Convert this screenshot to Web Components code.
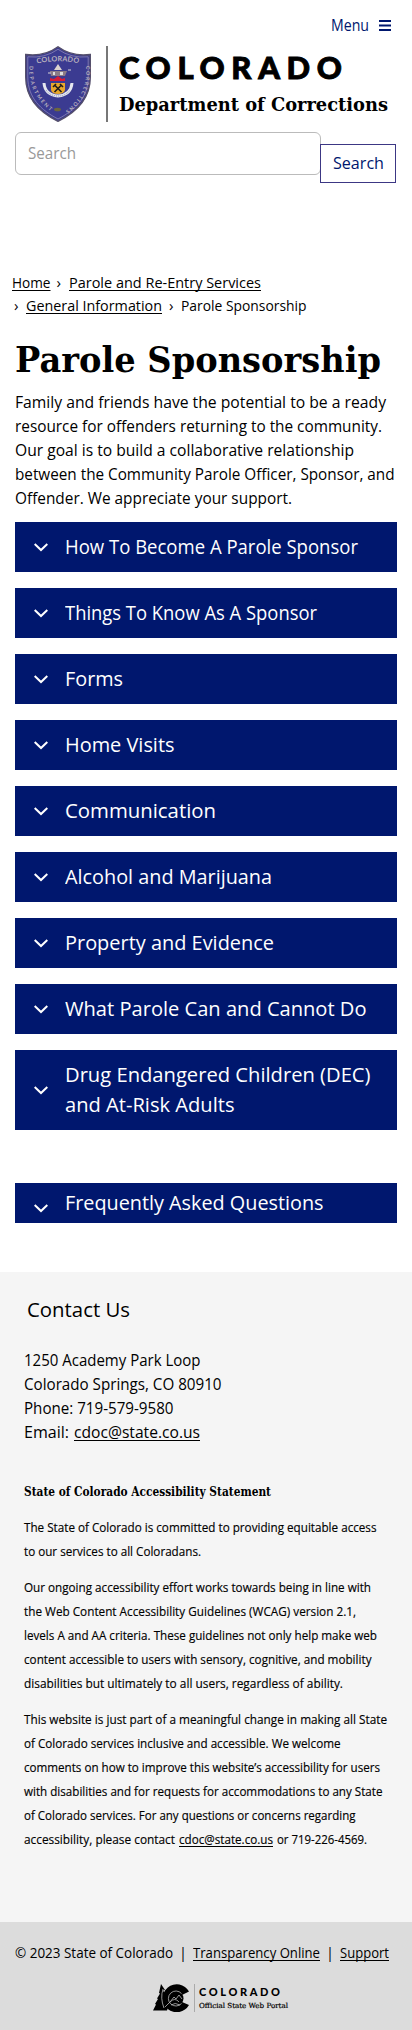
<!DOCTYPE html>
<html lang="en">
<head>
<meta charset="utf-8">
<title>Parole Sponsorship | Department of Corrections</title>
<style>
html,body{margin:0;padding:0;background:#fff}
body{font-family:"Open Sans","Noto Sans",sans-serif;font-size:16px;line-height:24px;color:#000;width:412px}
</style>
</head>
<body>
<doc-page></doc-page>
<script>
const define = (name, html, after) => {
  const t = document.createElement('template');
  t.innerHTML = html;
  customElements.define(name, class extends HTMLElement {
    constructor() {
      super();
      this.attachShadow({mode: 'open'}).appendChild(t.content.cloneNode(true));
    }
    connectedCallback() { if (after) after.call(this); }
  });
};

// One line of text set to a given measure: "w" is the width; "track" spaces letters instead of condensing them.
define('fit-line', `
<style>
:host{display:block;white-space:nowrap}
span{display:inline-block;transform-origin:0 50%;vertical-align:top}
:host([link]) span{text-decoration:underline;text-decoration-skip-ink:none;text-decoration-thickness:1px;text-underline-offset:2px}
</style><span><slot></slot></span>`, function () {
  const w = parseFloat(this.getAttribute('w'));
  const s = this.shadowRoot.querySelector('span');
  this.style.width = w + 'px';
  const natural = s.getBoundingClientRect().width;
  if (!natural) return;
  if (this.hasAttribute('track')) {
    const n = this.textContent.trim().length;
    s.style.letterSpacing = (w - natural) / (n - 1) + 'px';
  } else {
    s.style.transform = 'scaleX(' + w / natural + ')';
  }
});

define('doc-shield', `
<style>:host{display:block;width:66px;height:76px}svg{display:block}text{font-family:Lato,sans-serif;font-weight:700;fill:#b9b1bd}</style>
<svg width="66" height="76" viewBox="0 0 66 76">
<defs><path id="top" d="M12 17.500Q33 13 55 17.500"/><path id="left" d="M4.500 20C3 41 12 55 29 68"/><path id="right" d="M61 20C63 41 54 55 37 68"/></defs>
<path d="M.7 8.500Q19 11 33 .8Q47 11 65.300 8.500V31C65.300 53 52 66 33 75.300C14 66 .7 53 .7 31Z" fill="#3b3b91" stroke="#55506c" stroke-width="1.400"/>
<path d="M2.800 10.800Q20 12.500 33 3.300Q46 12.500 63.200 10.800V31C63.200 52 50 64 33 73C16 64 2.800 52 2.800 31Z" fill="none" stroke="#8d87b4" stroke-width=".8"/>
<text font-size="7.200"><textPath href="#top" textLength="42">COLORADO</textPath></text>
<text font-size="5.200"><textPath href="#left" textLength="52">DEPARTMENT</textPath></text>
<text font-size="5.200"><textPath href="#right" textLength="52">CORRECTIONS</textPath></text>
<path d="M33 18l4 6h-8z" fill="#ddd4ce"/><path d="M25 25h17l-2 5H26z" fill="#8b7b86"/><path d="M28 26h2v3h-2zm7 0h3v3h-3z" fill="#ddd"/>
<path d="M43 24h3M23 27h3" stroke="#d8d3d6"/>
<path d="M25 35v-3l4 1 4-3 4 3 3-1v3z" fill="#d61b36"/>
<path d="M19 37q1 12 14 13 13-1 14-13" fill="none" stroke="#e6e7ef" stroke-width="3"/>
<path d="M26 37h14v7q-1 4-7 4-6 0-7-4z" fill="#e9a82b"/>
<path d="M29.500 39l7 7m0-7-7 7M28 41l3-3m4 0 3 3" stroke="#201c1b" stroke-width="1.600" fill="none"/>
<path d="M21 44q4 6 12 6 8 0 12-6" fill="none" stroke="#6973a0" stroke-width=".7" stroke-dasharray="1 1"/>
<ellipse cx="32.500" cy="63.500" rx="3.500" ry="1.800" fill="#6d673f"/>
</svg>`);

define('site-header', `
<style>
:host{display:block;height:271px;color:#00176e}
.menu{display:flex;justify-content:flex-end;align-items:flex-start;gap:10px;padding:13px 21px 0 0;height:46px;box-sizing:border-box}
.menu svg{margin-top:6px}
.brand{display:flex;padding-left:25px;height:76px;color:#000}
.rule{width:2px;background:#777;margin:0 11px 0 15px}
.big{font:900 31px/32px Lato,sans-serif;margin-top:5px;-webkit-text-stroke:.9px #000}
.dept{font:bold 18.500px/24px "DejaVu Serif",serif;margin-top:10px}
.search{display:flex;margin:10px 0 0 15px;height:60px;align-items:flex-start}
.input{box-sizing:border-box;width:306px;height:43px;border:1px solid #bbb;border-radius:6px;padding:8px 12px;color:#999}
.button{box-sizing:border-box;width:76px;height:39px;margin:12px 0 0 -1px;border:1px solid #3c3784;background:#fff;padding:6px 12px}
</style>
<div class="menu"><fit-line w="38">Menu</fit-line><svg width="12" height="12"><path d="M0 2h12M0 6.500h12M0 11h12" stroke="#00176e" stroke-width="2"/></svg></div>
<div class="brand"><doc-shield></doc-shield><div class="rule"></div><div><fit-line class="big" w="223" track>COLORADO</fit-line><fit-line class="dept" w="269">Department of Corrections</fit-line></div></div>
<div class="search"><div class="input"><fit-line w="48">Search</fit-line></div><div class="button"><fit-line w="51">Search</fit-line></div></div>`);

define('bread-crumbs', `
<style>
:host{display:block;font-size:15px;line-height:23px;color:#000}
div{display:flex}.sep{width:6px}
</style>
<div style="padding-left:12px"><fit-line w="38.500" link>Home</fit-line><span class="sep" style="margin:0 6px">›</span><fit-line w="192" link>Parole and Re-Entry Services</fit-line></div>
<div style="padding-left:14px"><span class="sep" style="margin-right:6px">›</span><fit-line w="136" link>General Information</fit-line><span class="sep" style="margin:0 6px 0 7px">›</span><fit-line w="125.500">Parole Sponsorship</fit-line></div>`);

define('accordion-item', `
<style>
:host{display:flex;box-sizing:border-box;align-items:center;width:382px;min-height:50px;margin:0 0 16px 15px;padding:10px 0 10px 19px;background:#00176e;color:#fff;font-size:20px;line-height:30px}
svg{margin-right:17px;flex:none}
:host([compact]){min-height:40px;padding:5px 0;padding-left:19px;margin-top:53px;margin-bottom:0}
:host([compact]) svg{margin-top:10px}
</style>
<svg width="14" height="10"><path d="M.7 2l6.300 6 6.300-6" fill="none" stroke="#fff" stroke-width="2"/></svg><div><slot></slot></div>`);

define('contact-section', `
<style>
:host{display:block;box-sizing:border-box;height:650px;background:#f5f5f5;padding:23px 0 0 24px}
h2{font-size:20px;line-height:30px;font-weight:400;margin:0 0 23px 3px}
.row{display:flex;gap:5px}
h3{font:bold 12px/24px "DejaVu Serif",serif;margin:36px 0 0}
.small{font-size:12px;margin-top:12px;-webkit-text-stroke:.15px #000}.small .row{gap:4px}
</style>
<h2><fit-line w="103">Contact Us</fit-line></h2>
<fit-line w="176.500">1250 Academy Park Loop</fit-line>
<fit-line w="197.500">Colorado Springs, CO 80910</fit-line>
<fit-line w="149.500">Phone: 719-579-9580</fit-line>
<div class="row"><fit-line w="45">Email:</fit-line><fit-line w="126" link>cdoc@state.co.us</fit-line></div>
<h3><fit-line w="247">State of Colorado Accessibility Statement</fit-line></h3>
<div class="small"><fit-line w="352.500">The State of Colorado is committed to providing equitable access</fit-line><fit-line w="177">to our services to all Coloradans.</fit-line></div>
<div class="small"><fit-line w="347">Our ongoing accessibility effort works towards being in line with</fit-line><fit-line w="332">the Web Content Accessibility Guidelines (WCAG) version 2.1,</fit-line><fit-line w="353">levels A and AA criteria. These guidelines not only help make web</fit-line><fit-line w="347.500">content accessible to users with sensory, cognitive, and mobility</fit-line><fit-line w="319">disabilities but ultimately to all users, regardless of ability.</fit-line></div>
<div class="small"><fit-line w="363">This website is just part of a meaningful change in making all State</fit-line><fit-line w="316.500">of Colorado services inclusive and accessible. We welcome</fit-line><fit-line w="356">comments on how to improve this website’s accessibility for users</fit-line><fit-line w="358.500">with disabilities and for requests for accommodations to any State</fit-line><fit-line w="331.500">of Colorado services. For any questions or concerns regarding</fit-line>
<div class="row"><fit-line w="151">accessibility, please contact</fit-line><fit-line w="94" link>cdoc@state.co.us</fit-line><fit-line w="90">or 719-226-4569.</fit-line></div></div>`);

define('portal-logo', `
<style>
:host{display:flex;height:28px;margin:19px 0 0 153px;color:#000}
.rule{width:1px;background:#aaa;margin:0 4px 0 5px}
.big{font:900 11px/12px Lato,sans-serif;margin-top:2px}
.sub{font:7px/10px "DejaVu Serif",serif;margin-top:3px;-webkit-text-stroke:.2px #000}
</style>
<svg width="36" height="28" viewBox="0 0 36 28">
<path d="M8 0l4 6-2 .5 3 5-2 .5 3 6-2 .5 3 5-1 3H0l3-6-1-.5 3-5-1-.5 3-5-1-.5z"/>
<path d="M36 7.500l-7 3.500v7l7 3A14 14 0 1 1 36 7.500z"/>
<circle cx="23" cy="14.500" r="7.500"/>
<path d="M28.500 19.500a7.500 7.500 0 1 1 0-10M10 5q-3 9 1 19M12 23l5-5 4-5 2 2 3-4 3 4M17 18q5-5 9 0M18 21q4-3 9 0" fill="none" stroke="#bbb" stroke-width=".8"/>
</svg><div class="rule"></div><div><fit-line class="big" w="81" track>COLORADO</fit-line><fit-line class="sub" w="89">Official State Web Portal</fit-line></div>`);

define('site-footer', `
<style>
:host{display:block;box-sizing:border-box;height:108px;background:#dcdcdc;padding-top:19px;font-size:14.500px;line-height:24px}
.links{display:flex;padding-left:15px}
i{font-style:normal;width:3px}
</style>
<div class="links"><fit-line w="158">© 2023 State of Colorado</fit-line><i style="margin:0 11px 0 6px">|</i><fit-line w="127" link>Transparency Online</fit-line><i style="margin:0 11px 0 6px">|</i><fit-line w="49" link>Support</fit-line></div>
<portal-logo></portal-logo>`);

define('doc-page', `
<style>
:host{display:block;width:412px;height:2030px;overflow:hidden}
h1{font:bold 36px/44px "DejaVu Serif",serif;margin:20px 0 0 15px;color:#000}
.intro{margin:9px 0 12px 15px}
.end{height:49px}
</style>
<site-header></site-header>
<bread-crumbs></bread-crumbs>
<h1><fit-line w="366">Parole Sponsorship</fit-line></h1>
<div class="intro"><fit-line w="371">Family and friends have the potential to be a ready</fit-line><fit-line w="367">resource for offenders returning to the community.</fit-line><fit-line w="339">Our goal is to build a collaborative relationship</fit-line><fit-line w="379.500">between the Community Parole Officer, Sponsor, and</fit-line><fit-line w="277">Offender. We appreciate your support.</fit-line></div>
<accordion-item><fit-line w="293">How To Become A Parole Sponsor</fit-line></accordion-item>
<accordion-item><fit-line w="252">Things To Know As A Sponsor</fit-line></accordion-item>
<accordion-item><fit-line w="58">Forms</fit-line></accordion-item>
<accordion-item><fit-line w="109.500">Home Visits</fit-line></accordion-item>
<accordion-item><fit-line w="151">Communication</fit-line></accordion-item>
<accordion-item><fit-line w="207">Alcohol and Marijuana</fit-line></accordion-item>
<accordion-item><fit-line w="209">Property and Evidence</fit-line></accordion-item>
<accordion-item><fit-line w="301.500">What Parole Can and Cannot Do</fit-line></accordion-item>
<accordion-item style="margin-bottom:0"><fit-line w="305.500">Drug Endangered Children (DEC)</fit-line><fit-line w="169.500">and At-Risk Adults</fit-line></accordion-item>
<accordion-item compact><fit-line w="258.500">Frequently Asked Questions</fit-line></accordion-item>
<div class="end"></div>
<contact-section></contact-section>
<site-footer></site-footer>`);
</script>
</body>
</html>
